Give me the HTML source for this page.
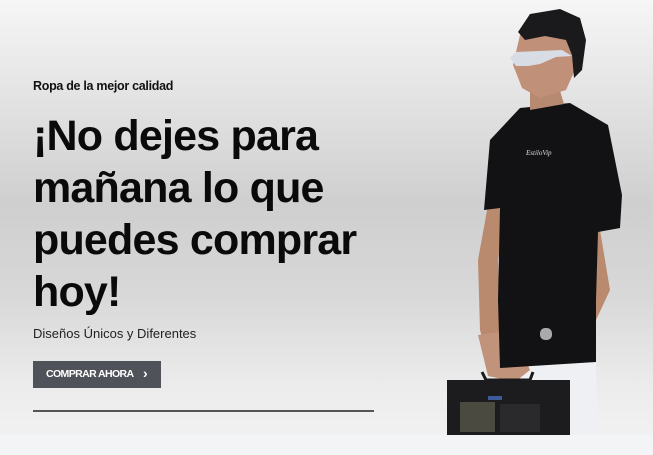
<!DOCTYPE html>
<html><head><style>
html,body{margin:0;padding:0;}
body{width:653px;height:455px;overflow:hidden;position:relative;font-family:"Liberation Sans",sans-serif;
background:linear-gradient(180deg,#f6f6f6 0%,#e6e6e6 18%,#cfcfcf 45%,#d8d8d8 65%,#ececec 85%,#f3f3f3 100%);}
.bottom{position:absolute;left:0;top:435px;width:653px;height:20px;background:#f3f4f5;}
.sub{position:absolute;left:33px;top:79px;font-size:12.5px;font-weight:bold;color:#111;letter-spacing:-0.3px;}
h1{position:absolute;left:33px;top:110px;margin:0;font-size:43px;line-height:52px;font-weight:bold;color:#0a0a0a;letter-spacing:-0.8px;width:380px;}
.d{position:absolute;left:33px;top:326px;font-size:13px;color:#222;}
.btn{position:absolute;left:33px;top:361px;width:128px;height:27px;background:#4f5359;color:#fff;font-size:10.5px;font-weight:bold;line-height:27px;box-sizing:border-box;padding-left:13px;letter-spacing:-0.6px;}
.btn span{position:absolute;left:110px;top:-1px;font-size:14px;}
.line{position:absolute;left:33px;top:410px;width:341px;height:2px;background:#555;}
svg{position:absolute;left:0;top:0;}
</style></head><body>
<div class="bottom"></div>
<div class="sub">Ropa de la mejor calidad</div>
<h1>¡No dejes para mañana lo que puedes comprar hoy!</h1>
<div class="d">Diseños Únicos y Diferentes</div>
<div class="btn">COMPRAR AHORA<span>›</span></div>
<div class="line"></div>
<svg width="653" height="455">
<path d="M490 365 L596 362 L598 435 L495 435 Z" fill="#eef0f3"/>
<path d="M488 205 L478 260 L480 330 L488 360 L505 365 L500 330 L498 260 L505 210 Z" fill="#b98a6e"/>
<path d="M600 230 L610 290 L596 320 L560 340 L540 352 L535 345 L556 325 L588 300 L588 235 Z" fill="#b98a6e"/>
<path d="M478 335 L512 330 L530 370 L515 382 L488 376 Z" fill="#c0937a"/>
<path d="M520 108 L570 103 L608 125 L622 195 L620 228 L598 232 L596 300 L596 362 L500 368 L498 300 L500 208 L484 210 L490 140 Z" fill="#121214"/>
<text x="526" y="155" font-size="7" fill="#ddd" font-family="Liberation Serif,serif" font-style="italic">EstiloVip</text>
<path d="M530 88 L558 84 L564 104 L530 110 Z" fill="#b68a70"/>
<path d="M520 35 L535 22 L568 24 L578 45 L574 72 L566 90 L540 98 L522 88 L517 75 L513 65 Z" fill="#c09078"/>
<path d="M518 32 L530 14 L560 9 L580 18 L586 40 L582 70 L574 78 L572 55 L566 40 L545 36 L525 40 Z" fill="#1a1a1c"/>
<path d="M510 58 L516 52 L562 50 L572 56 L556 57 L540 64 L528 66 L516 66 Z" fill="#d8dce4"/>
<rect x="540" y="328" width="12" height="12" rx="5" fill="#aaa"/>
<path d="M482 372 L486 380 L530 380 L533 372" stroke="#1a1a1a" stroke-width="3" fill="none"/>
<rect x="447" y="380" width="123" height="55" fill="#1c1c1e"/>
<rect x="460" y="402" width="35" height="30" fill="#4a4a40"/>
<rect x="500" y="404" width="40" height="28" fill="#2a2a2c"/>
<rect x="488" y="396" width="14" height="4" fill="#3b5b9a"/>
</svg>
</body></html>
